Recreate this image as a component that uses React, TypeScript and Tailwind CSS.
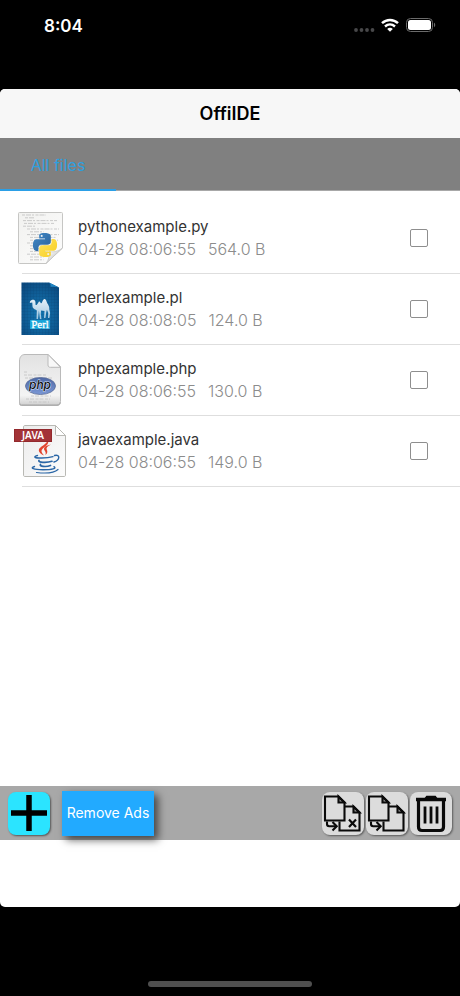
import type { ReactNode } from "react";

type FileItem = {
  name: string;
  date: string;
  size: string;
  icon: ReactNode;
};

const SNAKE =
  "M14.25.18l.9.2.73.26.59.3.45.32.34.34.25.34.16.33.1.3.04.26.02.2-.01.13V8.5l-.05.63-.13.55-.21.46-.26.38-.3.31-.33.25-.35.19-.35.14-.33.1-.3.07-.26.04-.21.02H8.77l-.69.05-.59.14-.5.22-.41.27-.33.32-.27.35-.2.36-.15.37-.1.35-.07.32-.04.27-.02.21v3.06H3.17l-.21-.03-.28-.07-.32-.12-.35-.18-.36-.26-.36-.36-.35-.46-.32-.59-.28-.73-.21-.88-.14-1.05-.05-1.23.06-1.22.16-1.04.24-.87.32-.71.36-.57.4-.44.42-.33.42-.24.4-.16.36-.1.32-.05.24-.01h.16l.06.01h8.16v-.83H6.18l-.01-2.75-.02-.37.05-.34.11-.31.17-.28.25-.26.31-.23.38-.2.44-.18.51-.15.58-.12.64-.1.71-.06.77-.04.84-.02 1.27.05zm-6.3 1.98l-.23.33-.08.41.08.41.23.34.33.22.41.09.41-.09.33-.22.23-.34.08-.41-.08-.41-.23-.33-.33-.22-.41-.09-.41.09z";

// [x, width] of each line of code printed on the page
const CODE_LINES = [
  [10, 24], [13, 10], [11, 34], [12, 30], [11, 12], [15, 32], [18, 14], [15, 32],
  [18, 26], [18, 28], [15, 24], [18, 22], [18, 20], [18, 18], [15, 20], [18, 14], [18, 14],
];

function PythonIcon() {
  return (
    <svg viewBox="0 0 56 56" className="size-14" aria-hidden="true">
      <defs>
        <linearGradient id="py-page" x1="0" y1="0" x2="1" y2="1">
          <stop offset="0" stopColor="#f1f1ef" />
          <stop offset="1" stopColor="#fdfdfd" />
        </linearGradient>
        <linearGradient id="py-curl" x1="0" y1="0" x2="1" y2="1">
          <stop offset="0.2" stopColor="#ffffff" />
          <stop offset="0.6" stopColor="#cccccc" />
        </linearGradient>
        <linearGradient id="py-blue" x1="0" y1="0" x2="1" y2="1">
          <stop offset="0" stopColor="#4089c8" />
          <stop offset="1" stopColor="#2b6199" />
        </linearGradient>
        <linearGradient id="py-yellow" x1="1" y1="1" x2="0" y2="0">
          <stop offset="0" stopColor="#ffe45c" />
          <stop offset="1" stopColor="#f7cd22" />
        </linearGradient>
      </defs>
      <path
        d="M7.5 2.5h42a1 1 0 0 1 1 1V38L34 53.5H7.5a1 1 0 0 1-1-1v-49a1 1 0 0 1 1-1z"
        fill="url(#py-page)"
        stroke="#c6c6c4"
      />
      {CODE_LINES.map(([x, w], i) => (
        <path
          key={i}
          d={`M${x} ${5 + i * 2.8}h${w}`}
          stroke="#b9b9b9"
          strokeWidth="0.7"
          strokeDasharray="3 1 5 1 2 1.5"
        />
      ))}
      <path
        d="M50.5 38L34 53.5c3-4 3.5-8 3-12 4 1 9 0 13.5-3.5z"
        fill="url(#py-curl)"
        stroke="#c6c6c4"
        strokeWidth="0.7"
      />
      <g transform="translate(21 23)">
        <path d={SNAKE} fill="url(#py-blue)" />
        <path d={SNAKE} fill="url(#py-yellow)" transform="rotate(180 12 12)" />
      </g>
    </svg>
  );
}

function PerlIcon() {
  return (
    <svg viewBox="0 0 56 56" className="size-14" aria-hidden="true">
      <defs>
        <radialGradient id="pl-bg" cx="0.5" cy="0.6" r="0.7">
          <stop offset="0" stopColor="#1478b4" />
          <stop offset="1" stopColor="#0b4a80" />
        </radialGradient>
        <pattern id="pl-grid" width="3" height="3" patternUnits="userSpaceOnUse">
          <path d="M0 0h3M0 0v3" stroke="#06365f" strokeWidth="0.6" />
        </pattern>
        <linearGradient id="pl-camel" x1="0" y1="0" x2="0" y2="1">
          <stop offset="0" stopColor="#e6f0f8" />
          <stop offset="1" stopColor="#9fc6e0" />
        </linearGradient>
      </defs>
      <path d="M9.500 1.500H37l10 5v47.500H9.500z" fill="url(#pl-bg)" />
      <path d="M9.500 1.500H37l10 5v47.500H9.500z" fill="url(#pl-grid)" opacity="0.4" />
      <path d="M37 1.500l10 5c-3-.8-6.500-1-8.500-.5.5-1.500 0-3-1.500-4.500z" fill="#1f86c4" />
      <path
        d="M18 20.5c.8-1.600 3.200-2.300 4.600-1.300 1.200 1 .8 3 1 4.700.8.600 1.600-.4 2.600-2.200.7-1.300 1.600-1.500 2.200-.3.600 1 1 1.400 1.600.2.700-2.200 1.700-3.700 2.700-3.500 1.400.2 1.700 2.600 2.700 4.400 1.200 1.800 2.100 3.400 1.900 6l.8 3.500-.7 5h-1.400l.2-5-1.300-3.200-.8 3.200-.6 5h-1.500l.5-7-3.400-.6-.3 3.600.6 5h-1.500l-1-8.500-.9 8.500h-1.500l.3-8.500c-1.200-1.200-3.200-1.300-4-3-.6-1.400-.2-3.700-.6-5l-2.400.4z"
        fill="url(#pl-camel)"
      />
      <rect x="18" y="39" width="20" height="9" fill="#19a5d8" />
      <text
        x="28"
        y="47"
        textAnchor="middle"
        fontFamily="Liberation Serif, serif"
        fontSize="11"
        fill="#fff"
        stroke="#fff"
        strokeWidth="0.3"
      >
        Perl
      </text>
    </svg>
  );
}

function PhpIcon() {
  return (
    <svg viewBox="0 0 56 56" className="size-14" aria-hidden="true">
      <defs>
        <linearGradient id="php-page" x1="0" y1="0" x2="0" y2="1">
          <stop offset="0" stopColor="#e2e2e2" />
          <stop offset="0.8" stopColor="#f4f4f4" />
          <stop offset="1" stopColor="#cfcfcf" />
        </linearGradient>
        <linearGradient id="php-oval" x1="0" y1="0" x2="0" y2="1">
          <stop offset="0" stopColor="#4d68a6" />
          <stop offset="1" stopColor="#7b98d6" />
        </linearGradient>
      </defs>
      <path
        d="M13 2.500h23l12.500 12v35c0 2.500-1 4-3.500 4H9.500c-1.500 0-2-.8-2-2V9c0-4 2-6.500 5.500-6.500z"
        fill="url(#php-page)"
        stroke="#bababa"
      />
      <path d="M8 51.500c0 1 .5 1.500 1.500 1.500H45c2 0 3-1 3-2.500" fill="none" stroke="#a4a4a4" />
      <path d="M36 2.500V13c0 1.500.8 2.300 2.300 2.300h10.200z" fill="#f8f8f8" stroke="#bababa" />
      <path
        d="M12 20h4M12 23h22M13 26h28M19 44h20M14 47h24M17 50h20"
        stroke="#c2c2c2"
        strokeDasharray="3 1 4 1.5"
        strokeWidth="0.8"
      />
      <ellipse cx="28.500" cy="34" rx="15" ry="8.500" fill="url(#php-oval)" stroke="#5a6c97" strokeWidth="0.8" />
      <text
        x="28"
        y="37"
        textAnchor="middle"
        fontFamily="Inter, sans-serif"
        fontSize="12"
        fontStyle="italic"
        fontWeight="500"
        fill="#111"
        stroke="#dbe3f5"
        strokeWidth="1"
        paintOrder="stroke"
      >
        php
      </text>
    </svg>
  );
}

function JavaIcon() {
  return (
    <svg viewBox="0 0 56 56" className="size-14" aria-hidden="true">
      <defs>
        <linearGradient id="jv-page" x1="0" y1="0" x2="1" y2="1">
          <stop offset="0" stopColor="#ececec" />
          <stop offset="1" stopColor="#fcfcfc" />
        </linearGradient>
      </defs>
      <path
        d="M13 2.500h30.500l10 10v39.500c0 1-.5 1.500-1.500 1.500H13c-1 0-1.500-.5-1.500-1.500V4c0-1 .5-1.500 1.500-1.500z"
        fill="url(#jv-page)"
        stroke="#b9b9b4"
      />
      <path d="M43.500 2.500v8.500c0 1 .5 1.500 1.500 1.500h8.500z" fill="#fff" stroke="#b9b9b4" />
      <g fill="#e2452f">
        <path d="M35.500 17c3.500 5-6 7.300-6 11 0 1.500 1.200 2.800 2.500 4.500-2.800-1.300-5.300-3-5.200-5.300.2-3.800 8.400-5.400 8.700-10.200z" />
        <path d="M39 21.500c-3.500 1.500-5.200 3.300-4.200 5.300.8 1.700 1 3.500-1.500 5.200.8-1.900.4-2.900-.5-4.200-2.300-3.100.8-5.300 6.200-6.300z" />
      </g>
      <g fill="none" stroke="#2a66a6" strokeLinecap="round">
        <path d="M25.500 32.500c-4 1-3.500 2.300 1.500 2.500s10.500-.3 14-1.300" strokeWidth="1.4" />
        <path d="M27 37.500c-1.500 2 7.500 2.600 13 .8" strokeWidth="1.700" />
        <path d="M28.500 41.500c-1.500 2 5.500 2.800 10 1" strokeWidth="1.700" />
        <path d="M42.500 32.500c6-1.500 5.500 4.500-.5 6.500" strokeWidth="1.400" />
        <path d="M22.500 43.500c-5 1.500-1 3.200 8.500 3.200s14-1.300 11-3" strokeWidth="1.400" />
        <path d="M24.500 49.500c9 1 18 .3 21.500-3" strokeWidth="1.200" />
      </g>
      <rect x="2" y="6" width="38" height="13" fill="#a33337" />
      <rect x="2.500" y="6.500" width="37" height="12" fill="none" stroke="#93292d" />
      <text
        x="21"
        y="16"
        textAnchor="middle"
        fontFamily="Noto Sans, sans-serif"
        fontSize="10"
        fontWeight="600"
        letterSpacing="0"
        fill="#fff"
      >
        JAVA
      </text>
    </svg>
  );
}

const files: FileItem[] = [
  { name: "pythonexample.py", date: "04-28 08:06:55", size: "564.0 B", icon: <PythonIcon /> },
  { name: "perlexample.pl", date: "04-28 08:08:05", size: "124.0 B", icon: <PerlIcon /> },
  { name: "phpexample.php", date: "04-28 08:06:55", size: "130.0 B", icon: <PhpIcon /> },
  { name: "javaexample.java", date: "04-28 08:06:55", size: "149.0 B", icon: <JavaIcon /> },
];

function StatusBar() {
  return (
    <div className="flex h-[89px] items-start justify-between pl-11 pr-6 pt-[14px] text-white">
      <span className="text-[17px] leading-6 font-semibold">8:04</span>
      <div className="flex h-[22px] items-center">
        <svg width="22" height="18" viewBox="0 0 22 18" fill="#48484a" aria-hidden="true">
          <circle cx="3" cy="14" r="1.900" />
          <circle cx="8.500" cy="14" r="1.900" />
          <circle cx="14" cy="14" r="1.900" />
          <circle cx="19.500" cy="14" r="1.900" />
        </svg>
        <svg className="ml-[5px]" width="20" height="16" viewBox="0 0 20 16" fill="none" stroke="#fff" aria-hidden="true">
          <path d="M2 6.200c4.600-4.300 11.400-4.300 16 0" strokeWidth="2.500" />
          <path d="M5 9.500c3-2.700 7-2.700 10 0" strokeWidth="2.400" />
          <path d="M10 14.800l-2.800-2.900c1.700-1.400 3.900-1.400 5.600 0z" fill="#fff" stroke="none" />
        </svg>
        <svg className="ml-1" width="32" height="16" viewBox="0 0 32 16" aria-hidden="true">
          <rect x="2.500" y="1.500" width="26" height="13" rx="4" fill="none" stroke="#6b6b6b" />
          <rect x="4" y="3" width="23" height="10" rx="2.500" fill="#fff" />
          <path d="M30 5.800c1.600.6 1.600 3.800 0 4.400z" fill="#6b6b6b" />
        </svg>
      </div>
    </div>
  );
}

function FileRow({ file }: { file: FileItem }) {
  return (
    <li>
      <label className="flex h-[70px] items-center pl-3 pr-8">
        {file.icon}
        <span className="ml-[10px] flex flex-1 flex-col">
          <span className="text-[15px] leading-[22px] text-[#333]">{file.name}</span>
          <span className="flex gap-3 text-base leading-[22px] font-light text-[#8c8c8c]">
            <span>{file.date}</span>
            <span>{file.size}</span>
          </span>
        </span>
        <input
          type="checkbox"
          className="size-[18px] appearance-none rounded-[2px] border border-[#8e8e8e] bg-white checked:bg-[#22aaff]"
        />
      </label>
      <div className="ml-[22px] h-px bg-[#dedede]" />
    </li>
  );
}

function ToolButton({ label, children }: { label: string; children: ReactNode }) {
  return (
    <button
      type="button"
      aria-label={label}
      className="flex h-[43px] w-[42px] items-center justify-center rounded-lg bg-[#dcdcdc] shadow-[1px_1px_2px_rgba(0,0,0,0.45)]"
    >
      {children}
    </button>
  );
}

function CopyGlyph({ crossed = false }: { crossed?: boolean }) {
  return (
    <svg width="42" height="43" viewBox="0 0 42 43" fill="none" stroke="#0a0a0a" strokeWidth="2.100" aria-hidden="true">
      <path d="M16.500 4.500H3v24h19.500v-18z" />
      <path d="M16.500 4.500v6h6z" fill="#0a0a0a" fillOpacity="0.3" />
      <path d="M22.500 14.500h9l6 6V38.500h-20v-9" />
      <path d="M31.500 14.500v6h6z" fill="#0a0a0a" fillOpacity="0.3" />
      <path d="M5 29.500v2.500c0 1.500.8 2.200 2.200 2.200h6.800" />
      <path d="M10.500 30l4.200 4.200-4.200 4.200" />
      {crossed && <path d="M27 27.500l7 7.500M34 27.500l-7 7.500" strokeWidth="2.200" />}
    </svg>
  );
}

export default function App() {
  return (
    <div className="flex min-h-screen flex-col bg-black font-['Inter',sans-serif]">
      <StatusBar />

      <main className="flex flex-1 flex-col overflow-hidden rounded-[5px] bg-white">
        <header className="flex h-[49px] items-center justify-center bg-[#f7f7f7]">
          <h1 className="text-lg font-semibold text-black">OffiIDE</h1>
        </header>

        <nav className="flex h-[53px] border-b border-[#a8a8a8] bg-[#808080]">
          <button
            type="button"
            className="-mb-px w-[116px] border-b-2 border-[#2b9fe6] pt-[2px] text-base text-[#2e9fdf]"
          >
            All files
          </button>
        </nav>

        <ul className="flex-1 pt-3">
          {files.map((file) => (
            <FileRow key={file.name} file={file} />
          ))}
        </ul>

        <footer className="mb-[67px] flex h-[54px] items-center bg-[#a8a8a8] px-2">
          <button
            type="button"
            aria-label="New file"
            className="flex h-[43px] w-[42px] items-center justify-center rounded-lg bg-[#2be4ff] shadow-[1px_1px_2px_rgba(0,0,0,0.5)]"
          >
            <svg width="36" height="36" viewBox="0 0 36 36" stroke="#000" strokeWidth="5.500" aria-hidden="true">
              <path d="M18 0v36M0 18h36" />
            </svg>
          </button>
          <button
            type="button"
            className="ml-3 h-[45px] w-[92px] bg-[#22aaff] text-sm whitespace-nowrap text-white shadow-[4px_4px_8px_rgba(0,0,0,0.6)]"
          >
            Remove Ads
          </button>
          <div className="ml-auto flex gap-[2px]">
            <ToolButton label="Move files">
              <CopyGlyph crossed />
            </ToolButton>
            <ToolButton label="Copy files">
              <CopyGlyph />
            </ToolButton>
            <ToolButton label="Delete files">
              <svg width="42" height="43" viewBox="0 0 42 43" fill="none" stroke="#0a0a0a" aria-hidden="true">
                <path d="M6 7.500h30" strokeWidth="3.500" />
                <path d="M15.500 7l1.500-2h8l1.500 2" strokeWidth="2.500" />
                <path d="M8.500 8v27c0 2.500 1 3.500 3.500 3.500h18c2.500 0 3.500-1 3.500-3.500V8" strokeWidth="3.200" />
                <path d="M15 14.500v17M21 14.500v17M27 14.500v17" strokeWidth="2.800" />
              </svg>
            </ToolButton>
          </div>
        </footer>
      </main>

      <div className="flex h-[89px] items-end justify-center pb-[9px]">
        <div className="h-[6px] w-[164px] rounded-full bg-[#4f4f4f]" />
      </div>
    </div>
  );
}
